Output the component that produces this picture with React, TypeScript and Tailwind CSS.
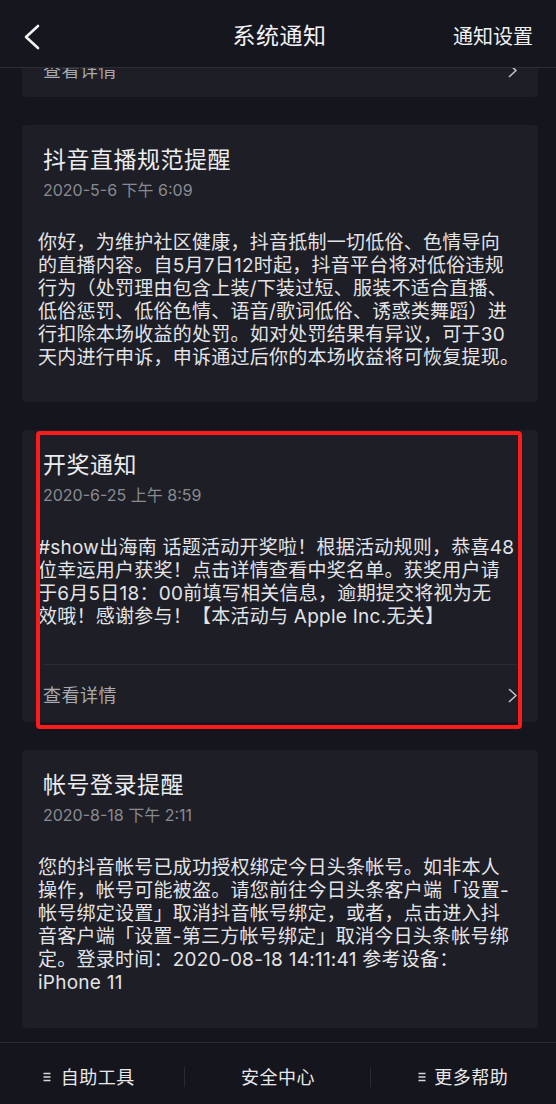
import React from "react";

const FONT = { fontFamily: "Inter, 'Noto Sans CJK SC', 'Noto Sans', sans-serif" };

function Chevron() {
  return (
    <svg width="10" height="15" viewBox="0 0 10 15" fill="none">
      <path d="M1.5 1.5 L8 7.5 L1.5 13.5" stroke="#c4c4c8" strokeWidth="1.6" strokeLinecap="round" strokeLinejoin="round" />
    </svg>
  );
}

function MenuIcon() {
  return (
    <svg width="8" height="10" viewBox="0 0 8 10" fill="none">
      <path d="M0.5 1.5 H7.5 M0.5 5 H7.5 M0.5 8.5 H7.5" stroke="#d8d8dc" strokeWidth="1.3" />
    </svg>
  );
}

function LinkRow() {
  return (
    <div className="mx-[21px] h-[58px] border-t border-[#2b2c34] pt-[3px] flex items-center justify-between">
      <span className="text-[18px] text-[#a9aab0] tracking-[0.5px]">查看详情</span>
      <span className="mr-[-1px]"><Chevron /></span>
    </div>
  );
}

function Card({ title, date, lines, link, bodyGap = 33, children }: { title: string; date: string; lines: string[]; link?: boolean; bodyGap?: number; children?: React.ReactNode }) {
  return (
    <div className="relative rounded-[4px] bg-[#1d1e26] pt-[20px]">
      <div className="pl-[21px] h-[30px] leading-[30px] text-[23px] font-normal text-[#ececee] tracking-[0.5px]">{title}</div>
      <div className="pl-[21px] mt-[5px] h-[20px] leading-[20px] text-[16px] text-[#8a8b91]">{date}</div>
      <div className="pl-[16px] mt-[31px] text-[19px] leading-[23px] text-[#e4e4e6] tracking-[0.25px]" style={{ paddingBottom: bodyGap }}>
        {lines.map((l, i) => (
          <div key={i} className="whitespace-nowrap">{l}</div>
        ))}
      </div>
      {link && <LinkRow />}
      {children}
    </div>
  );
}

export default function App() {
  return (
    <div className="w-[556px] h-[1104px] bg-[#15161d] flex flex-col overflow-hidden" style={FONT}>
      {/* Header */}
      <div className="h-[68px] shrink-0 bg-[#16171e] border-b border-[#2c2d34] relative z-10 flex items-center pt-[6px] px-[23px]">
        <div className="w-[80px]">
          <svg width="18" height="26" viewBox="0 0 18 26" fill="none">
            <path d="M15 2 L3 13 L15 24" stroke="#f2f2f4" strokeWidth="2.6" strokeLinecap="round" strokeLinejoin="round" />
          </svg>
        </div>
        <div className="flex-1 text-center text-[23px] font-normal text-[#f2f2f4] tracking-[0.5px] pl-[3px]">系统通知</div>
        <div className="w-[80px] text-right text-[20px] text-[#f0f0f2] whitespace-nowrap">通知设置</div>
      </div>

      {/* Content */}
      <div className="flex-1 overflow-hidden pl-[22px] pr-[18px] flex flex-col gap-[28px]">
        <div className="rounded-[4px] bg-[#1d1e26] mt-[-29px]">
          <LinkRow />
        </div>

        <Card
          title="抖音直播规范提醒"
          date="2020-5-6 下午 6:09"
          lines={[
            "你好，为维护社区健康，抖音抵制一切低俗、色情导向",
            "的直播内容。自5月7日12时起，抖音平台将对低俗违规",
            "行为（处罚理由包含上装/下装过短、服装不适合直播、",
            "低俗惩罚、低俗色情、语音/歌词低俗、诱惑类舞蹈）进",
            "行扣除本场收益的处罚。如对处罚结果有异议，可于30",
            "天内进行申诉，申诉通过后你的本场收益将可恢复提现。",
          ]}
        />

        <Card
          title="开奖通知"
          date="2020-6-25 上午 8:59"
          link
          bodyGap={36}
          lines={[
            "#show出海南 话题活动开奖啦！根据活动规则，恭喜48",
            "位幸运用户获奖！点击详情查看中奖名单。获奖用户请",
            "于6月5日18：00前填写相关信息，逾期提交将视为无",
            "效哦！感谢参与！【本活动与 Apple Inc.无关】",
          ]}
        >
          <div className="absolute left-[14px] top-[1px] w-[486px] h-[298px] border-[4px] border-[#ff1b1b] rounded-[4px] pointer-events-none" />
        </Card>

        <Card
          title="帐号登录提醒"
          date="2020-8-18 下午 2:11"
          bodyGap={34}
          lines={[
            "您的抖音帐号已成功授权绑定今日头条帐号。如非本人",
            "操作，帐号可能被盗。请您前往今日头条客户端「设置-",
            "帐号绑定设置」取消抖音帐号绑定，或者，点击进入抖",
            "音客户端「设置-第三方帐号绑定」取消今日头条帐号绑",
            "定。登录时间：2020-08-18 14:11:41 参考设备：",
            "iPhone 11",
          ]}
        />
      </div>

      {/* Bottom bar */}
      <div className="h-[62px] shrink-0 border-t border-[#2a2b32] bg-[#15161d] grid grid-cols-3 items-center pt-[7px]">
        <div className="flex items-center justify-center gap-[10px] relative pr-[8px]">
          <MenuIcon />
          <span className="text-[18px] text-[#e8e8ea] tracking-[0.5px]">自助工具</span>
          <span className="absolute right-0 top-1/2 -translate-y-1/2 h-[20px] w-px bg-[#2a2b32]" />
        </div>
        <div className="flex items-center justify-center relative">
          <span className="text-[18px] text-[#e8e8ea] tracking-[0.5px]">安全中心</span>
          <span className="absolute right-0 top-1/2 -translate-y-1/2 h-[20px] w-px bg-[#2a2b32]" />
        </div>
        <div className="flex items-center justify-center gap-[8px]">
          <MenuIcon />
          <span className="text-[18px] text-[#e8e8ea] tracking-[0.5px]">更多帮助</span>
        </div>
      </div>
    </div>
  );
}
